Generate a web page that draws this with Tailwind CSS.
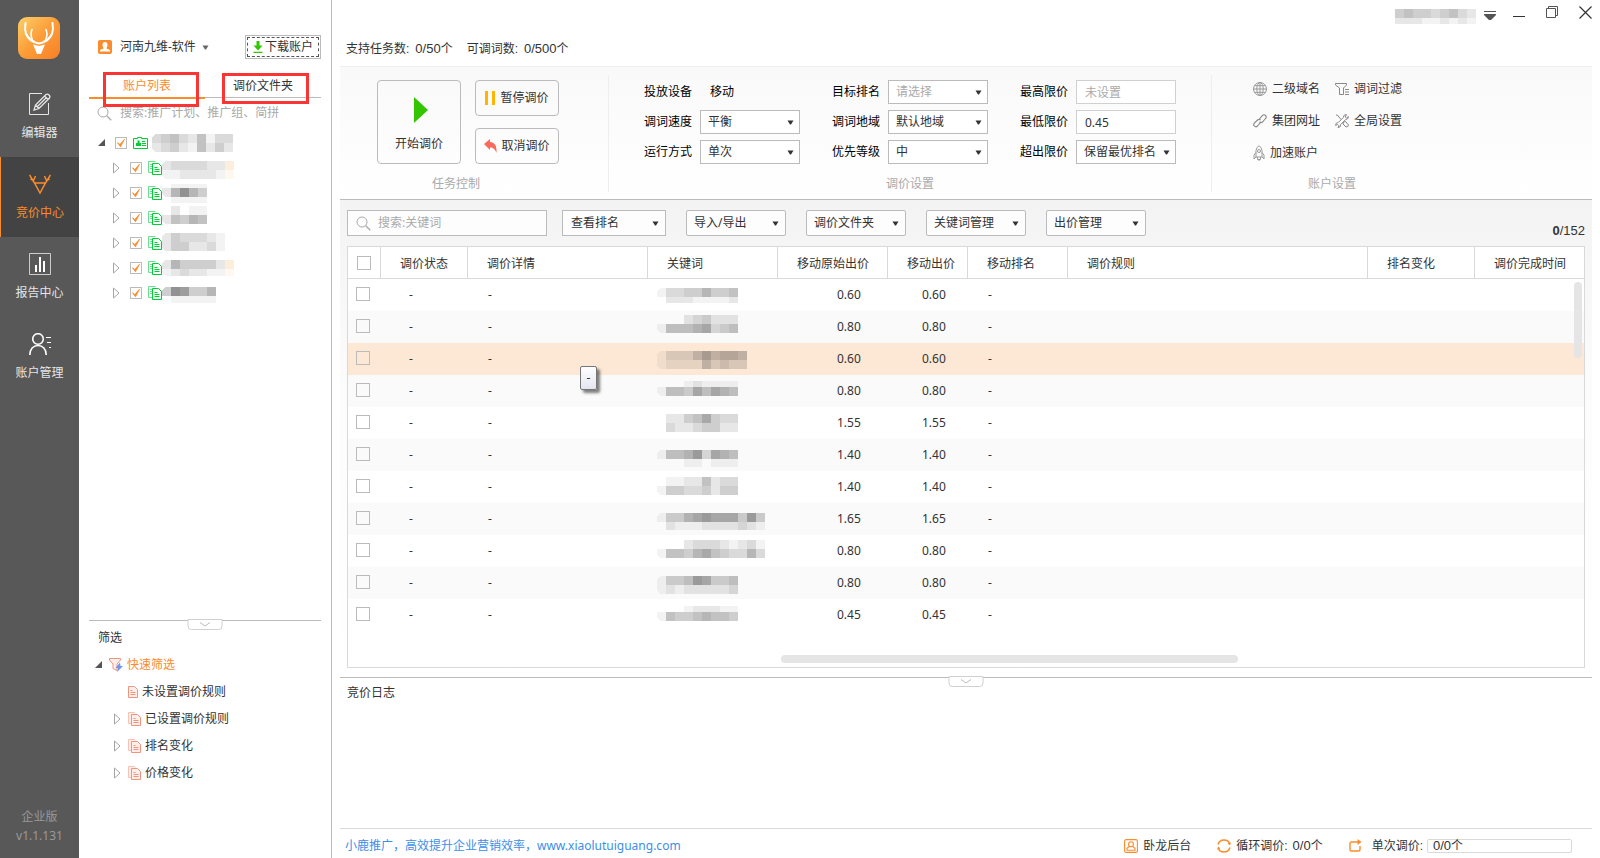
<!DOCTYPE html>
<html lang="zh-CN">
<head>
<meta charset="UTF-8">
<title>小鹿推广 – 竞价中心</title>
<meta name="viewport" content="width=device-width,initial-scale=1">
<script src="https://cdn.jsdelivr.net/npm/@tailwindcss/browser@4"></script>
</head>
<body class="flex min-h-screen bg-white pr-2 font-['Noto_Sans','Noto_Sans_CJK_SC',sans-serif] text-xs text-[#333]">

<!-- icon sprite -->
<svg class="hidden">
  <symbol id="i-search" viewBox="0 0 15 15"><circle cx="6" cy="6" r="5" fill="none" stroke="currentColor"/><path d="M9.8 9.8l4.4 4.4" stroke="currentColor" stroke-width="1.4"/></symbol>
  <symbol id="i-down" viewBox="0 0 7 5"><path d="M.5.500h6L4 4.500H3z" fill="currentColor"/></symbol>
  <symbol id="i-open" viewBox="0 0 8 8"><path d="M8 0v8H0z" fill="#555"/></symbol>
  <symbol id="i-closed" viewBox="0 0 7 12"><path d="M.5 1v10L6 6z" fill="#fff" stroke="#a5a5a5"/></symbol>
  <symbol id="i-tick" viewBox="0 0 12 12"><path d="M2.500 5.800l2.300 1.700L9.500 2.200 5.500 9.800z" fill="#fa8c2c" stroke="#fa8c2c" stroke-width=".8"/></symbol>
  <symbol id="i-chevron" viewBox="0 0 11 5"><path d="M.5.500l5 3.500 5-3.500" fill="none" stroke="#bbb"/></symbol>
  <symbol id="i-card" viewBox="0 0 15 12"><path d="M.5 1.500h4v-1h4v1h6v10H.5z" fill="#f1fdf5" stroke="#0c3"/><path d="M4.500 3.500h2v2.500h1.500v3H3V6h1.500z" fill="#0c3"/><path d="M9 4.500h3M9 6.500h4M9 8.500h4" stroke="#0c3"/></symbol>
  <symbol id="i-plan" viewBox="0 0 14 14"><path d="M7.500.500h-7v11h3.500M2 3.500h2M2 5.500h2M2 7.500h2" fill="none" stroke="#6bde8f"/><path d="M4.500 2.500h6l3 3v8h-9z" fill="#f1fdf5" stroke="#0c3"/><path d="M6.500 6.500h3M6.500 8.500h5M6.500 10.500h5" stroke="#0c3"/></symbol>
  <symbol id="i-doc" viewBox="0 0 10 12"><path d="M.5.500h6l3 3v8h-9z" fill="#fdeeea" stroke="#ee9580"/><path d="M2.500 4.500h2M2.500 6.500h5M2.500 8.500h5" stroke="#ee9580"/></symbol>
  <symbol id="i-docs" viewBox="0 0 13 14"><path d="M3 11.500H.5v-11h6l1 1" fill="#fdeeea" stroke="#f9c2b3"/><path d="M3.500 2.500h6l3 3v8h-9z" fill="#fdeeea" stroke="#ee9580"/><path d="M5.500 6.500h2M5.500 8.500h5M5.500 10.500h5" stroke="#ee9580"/></symbol>
</svg>

<!-- side navigation -->
<nav class="flex w-[79px] shrink-0 flex-col items-center bg-[#585858] pt-[17px] text-[#e6e6e6]">
  <svg class="mb-[18px] ml-[18px] size-[42px] self-start" viewBox="0 0 42 42">
    <defs><linearGradient id="lg" x1="0" y1="0" x2="1" y2="1"><stop offset="0" stop-color="#fdd06a"/><stop offset=".5" stop-color="#fb9d38"/><stop offset="1" stop-color="#f97f26"/></linearGradient></defs>
    <rect width="42" height="42" rx="9" fill="url(#lg)"/>
    <g fill="none" stroke="#fff" stroke-linecap="round">
      <path d="M7.500 6C6 15 8 20 13 23.500c3 2 5 2.500 8 3 3-.500 5-1 8-3 5-3.500 7-8.500 5.500-17.500" stroke-width="2"/>
      <path d="M14 12.500c-1.500 3.500-1 7.500.500 11M28 12.500c1.500 3.500 1 7.500-.500 11" stroke-width="1.600"/>
      <path d="M7.500 14c1 4.500 5 8 9.500 10.500M34.500 14c-1 4.500-5 8-9.500 10.500" stroke-width="1"/>
    </g>
    <path d="M15 27.500l6 1.500 6-1.500-4 9.500h-4z" fill="#fff"/>
  </svg>
  <a href="#editor" class="flex h-20 w-full flex-col items-center pt-4">
    <svg class="size-[22px]" viewBox="0 0 22 22" fill="none" stroke="#e6e6e6"><path d="M13 .5H.5v21h19V10"/><path d="M5 17l1.500-5L17 1.500q1.500-1 3 .500t.500 3L10 15.500zM6.500 12l3.500 3.500M15.500 3l3.500 3.500M8.500 13.500l9-9" stroke-width="1.300"/></svg>
    <span class="mt-2.5">编辑器</span>
  </a>
  <a href="#bid" class="flex h-20 w-full flex-col items-center border-l border-[#fa8c2c] bg-[#434343] pt-4 text-[#fa8c2c]">
    <svg class="size-[22px]" viewBox="0 0 22 22" fill="none" stroke="currentColor" stroke-width="1.500"><path d="M.5 2l5 8L11 20l5.500-10 5-8M5.500 10h11M1.500 6l3 1.500L6.500 3M20.500 6l-3 1.500L15.500 3"/></svg>
    <span class="mt-2.5">竞价中心</span>
  </a>
  <a href="#report" class="flex h-20 w-full flex-col items-center pt-4">
    <svg class="size-[22px]" viewBox="0 0 22 22"><path d="M.5.500h21v21H.5z" fill="none" stroke="#ccc"/><path d="M7 12v7M11 4v15M15 8v11" stroke="#fff" stroke-width="2"/></svg>
    <span class="mt-2.5">报告中心</span>
  </a>
  <a href="#account" class="flex h-20 w-full flex-col items-center pt-4">
    <svg class="size-[22px]" viewBox="0 0 22 22" fill="none" stroke="#fff"><circle cx="9" cy="6" r="5.300" stroke-width="1.600"/><path d="M.8 22c0-6 3.500-9.500 8.200-9.500s8.200 3.500 8.200 9.500" stroke-width="1.600"/><path d="M17 4.500h5M18 9.500h4M20 14.500h2"/></svg>
    <span class="mt-2.5">账户管理</span>
  </a>
  <div class="mt-auto pb-3.5 text-center text-[#999]">
    <p class="mb-[3px]">企业版</p>
    <p>v1.1.131</p>
  </div>
</nav>

<!-- account panel -->
<aside class="relative flex w-[253px] shrink-0 flex-col border-r border-[#bbb] px-2.5 pt-[35px]">
  <div class="flex h-6 items-center pl-[9px]">
    <svg class="size-3.5" viewBox="0 0 14 14"><rect width="14" height="14" rx="2" fill="#fa8c2c"/><path d="M7 2c2 0 2.500 1.500 2.500 3S8.500 7.500 8.500 8.500L12 10v1.500H2V10l3.500-1.500c0-1-1-2-1-3.500S5 2 7 2z" fill="#fff"/></svg>
    <button class="ml-2 flex items-center gap-1.5">河南九维-软件<svg class="h-[5px] w-[7px] text-[#666]"><use href="#i-down"/></svg></button>
    <button class="ml-auto h-6 border border-[#bbb] p-px"><span class="flex h-5 items-center gap-0.5 border border-dashed border-[#555] px-[5px]"><svg class="h-3 w-[10px]" viewBox="0 0 10 12"><path d="M3.500 0h3v4.500H9.500L5 9.500.5 4.500h3zM.5 10.800h9v1.200h-9z" fill="#33c600"/></svg>下载账户</span></button>
  </div>
  <div class="mt-3 flex h-7 items-stretch">
    <button class="flex-1 border-b-2 border-[#fa8c2c] pt-1 text-[#fa8c2c]">账户列表</button>
    <button class="mb-px flex-1 border-b border-[#bbb] pt-1">调价文件夹</button>
  </div>
  <span class="pointer-events-none absolute left-6 top-[72px] h-[35px] w-24 border-3 border-[#fb3434]"></span>
  <span class="pointer-events-none absolute left-[143px] top-[73px] h-[31px] w-[87px] border-3 border-[#fb3434]"></span>
  <div class="flex h-7 items-center gap-2 pl-2">
    <svg class="size-[15px] text-[#aaa]"><use href="#i-search"/></svg>
    <input aria-label="搜索" placeholder="搜索:推广计划、推广组、简拼" class="min-w-0 flex-1 outline-none placeholder:text-[#aaa]">
  </div>
  <div id="accountTree" class="mt-[3px] flex-1"></div>

  <div class="relative h-[238px] border-t border-[#bbb] pt-[9px] pl-[9px]">
    <button aria-label="收起" class="absolute -top-0.5 left-1/2 flex h-[11px] w-[35px] -translate-x-1/2 items-center justify-center rounded-b-sm border border-[#d0d0d0] bg-white"><svg class="h-[5px] w-[11px]"><use href="#i-chevron"/></svg></button>
    <h2>筛选</h2>
    <ul class="mt-[5px] -ml-[3px]">
      <li class="flex h-[27px] items-center text-[#fa8c2c]">
        <svg class="size-[7px]"><use href="#i-open"/></svg>
        <svg class="mr-1 ml-[7px] size-3.5" viewBox="0 0 14 14"><path d="M.5.500h11v1.500L8 6v6.500l-4-2V6L.5 2z" fill="#fdeeea" stroke="#ee9580"/><path d="M11 4.500L6.500 10H9l-1 4 6-6h-2.500z" fill="#6f95ec"/></svg>
        快速筛选
      </li>
      <li class="flex h-[27px] items-center gap-1 pl-[33px]"><svg class="h-3 w-2.5"><use href="#i-doc"/></svg>未设置调价规则</li>
      <li class="flex h-[27px] items-center gap-1 pl-[19px]"><svg class="mr-[3px] h-3 w-[7px]"><use href="#i-closed"/></svg><svg class="h-3.5 w-[13px]"><use href="#i-docs"/></svg>已设置调价规则</li>
      <li class="flex h-[27px] items-center gap-1 pl-[19px]"><svg class="mr-[3px] h-3 w-[7px]"><use href="#i-closed"/></svg><svg class="h-3.5 w-[13px]"><use href="#i-docs"/></svg>排名变化</li>
      <li class="flex h-[27px] items-center gap-1 pl-[19px]"><svg class="mr-[3px] h-3 w-[7px]"><use href="#i-closed"/></svg><svg class="h-3.5 w-[13px]"><use href="#i-docs"/></svg>价格变化</li>
    </ul>
  </div>
</aside>

<main class="ml-2 flex min-w-0 flex-1 flex-col">
  <!-- title bar -->
  <header class="flex h-[66px] items-start justify-between">
    <p class="flex gap-3.5 pt-[41px] pl-1.5 font-['Liberation_Sans','Noto_Sans_CJK_SC',sans-serif]">
      <span class="flex items-center gap-1.5">支持任务数:<span class="text-[13px] leading-4">0/50<span class="text-xs">个</span></span></span>
      <span class="flex items-center gap-1.5">可调词数:<span class="text-[13px] leading-4">0/500<span class="text-xs">个</span></span></span>
    </p>
    <div class="flex items-center">
      <svg id="userName" class="h-6 w-[90px]"></svg>
      <button aria-label="菜单" class="ml-2"><svg class="mt-1.5 h-[9px] w-3" viewBox="0 0 12 9"><path d="M0 0h12v1H0zM0 3h12v1L7 9H5L0 4z" fill="#555"/></svg></button>
      <button aria-label="最小化" class="ml-[17px]"><svg class="h-6 w-3" viewBox="0 0 12 24"><path d="M0 16.500h12" stroke="#333"/></svg></button>
      <button aria-label="还原" class="ml-[21px]"><svg class="size-3" viewBox="0 0 12 12" fill="none" stroke="#555"><path d="M.5 2.500h9v9h-9zM2.500 2.500v-2h9v9h-2"/></svg></button>
      <button aria-label="关闭" class="ml-[21px]"><svg class="size-[13px]" viewBox="0 0 13 13" stroke="#333" stroke-width="1.200"><path d="M.5.500l12 12M12.500.500l-12 12"/></svg></button>
    </div>
  </header>

  <!-- ribbon -->
  <section class="flex border-t border-b border-t-[#eee] border-b-[#bbb] bg-linear-to-b from-[#f9f9f9] to-white pt-2 pb-[7px] text-black">
    <div class="flex flex-col gap-3 border-r border-[#eee] pt-[5px] pr-[49px] pl-[37px] text-[#333]">
      <div class="flex gap-3.5">
        <button class="flex h-[84px] w-[84px] flex-col items-center rounded-sm border border-[#bbb] pt-4">
          <svg class="h-[26px] w-[18px]" viewBox="0 0 18 26"><path d="M4 0l14 13L4 26z" fill="#33c600"/></svg>
          <span class="mt-[13px]">开始调价</span>
        </button>
        <div class="flex flex-col justify-between">
          <button class="flex h-9 w-[84px] items-center justify-center gap-1 rounded-sm border border-[#bbb]"><svg class="h-3.5 w-[11px]" viewBox="0 0 11 14"><path d="M0 0h3v14H0zM7 0h3v14H7z" fill="#ffb400"/></svg>暂停调价</button>
          <button class="flex h-9 w-[84px] items-center justify-center gap-1 rounded-sm border border-[#bbb]"><svg class="h-3.5 w-[13px]" viewBox="0 0 13 14"><path d="M0 5l6-5v3c5 .500 7 4 6.500 11C11 10 9 8.500 6 8.500V11z" fill="#fb6a5b"/></svg>取消调价</button>
        </div>
      </div>
      <h2 class="pl-[55px] text-[#aaa]">任务控制</h2>
    </div>
    <div class="flex flex-col gap-3 border-r border-[#eee] px-[35px] pt-[5px]">
      <div id="settings" class="grid grid-cols-3 gap-x-8 gap-y-1.5"></div>
      <h2 class="text-center text-[#aaa]">调价设置</h2>
    </div>
    <div class="flex flex-1 flex-col pt-1.5 pl-[41px] text-[#333]">
      <div class="grid h-[95px] auto-rows-[16px] grid-cols-[max-content_max-content] gap-x-[15px] gap-y-4">
        <a href="#domain" class="flex items-center gap-[5px]"><svg class="size-3.5" viewBox="0 0 14 14" fill="none" stroke="#999"><circle cx="7" cy="7" r="6.500"/><ellipse cx="7" cy="7" rx="3.200" ry="6.500"/><path d="M7 .5v13M.5 7h13M1.500 3.700h11M1.500 10.300h11"/></svg>二级域名</a>
        <a href="#filter" class="flex items-center gap-[5px]"><svg class="size-3.5" viewBox="0 0 14 14" fill="none" stroke="#888"><path d="M.5 1.500h11v1.500L8.500 6v6.500h-4V6L.5 3zM10 7.500h4M10 10h4M10 12.500h4"/></svg>调词过滤</a>
        <a href="#group" class="flex items-center gap-[5px]"><svg class="size-3.5" viewBox="0 0 14 14" fill="none" stroke="#888" stroke-width="1.100"><path d="M6 5.500L9.500 1.500q1.500-1.500 3 0t0 3L9.500 8q-1.500 1.200-3 0M8 7.800L4.500 12q-1.500 1.500-3 .200t-.200-3L4.500 6q1.500-1.200 3 0"/></svg>集团网址</a>
        <a href="#global" class="flex items-center gap-[5px]"><svg class="size-3.5" viewBox="0 0 14 14" fill="none" stroke="#888"><path d="M1 1l1.500.200L6 5.500M8.500 8l2-.500L13.500 11q0 2-2.500 2L8 10zM13.500 2.500L11.500 4l-1.300-1L11.500.600Q8.500.200 8.300 3.500l-5 5Q.5 8.500.6 11.500l2-1 1.300 1.300-1 1.700q3 .200 2.800-3l5-5q2.800-.200 2.800-3z"/></svg>全局设置</a>
        <a href="#boost" class="flex items-center gap-[5px]"><svg class="h-4 w-3" viewBox="0 0 12 16" fill="none" stroke="#999"><path d="M3 12V5.500Q3.500 2 6 .700 8.500 2 9 5.500V12zM3 7.500L1 10v4l2-2M9 7.500l2 2.500v4l-2-2M4.500 12v2.500h3V12M6 14v2"/><circle cx="6" cy="6" r="1.500"/></svg>加速账户</a>
      </div>
      <h2 class="pl-[55px] text-[#aaa]">账户设置</h2>
    </div>
  </section>

  <!-- keyword area -->
  <section class="relative flex flex-1 flex-col bg-linear-to-b from-[#f3f3f3] via-[#fcfcfc] via-40% to-white px-[7px] pt-2.5 pb-[9px]">
    <div class="flex h-9 items-start">
      <label class="mr-[15px] flex h-[26px] w-[200px] items-center gap-[7px] border border-[#bbb] bg-[#fdfdfd] px-2">
        <svg class="size-[15px] shrink-0 text-[#aaa]"><use href="#i-search"/></svg>
        <input aria-label="搜索关键词" placeholder="搜索:关键词" class="min-w-0 flex-1 outline-none placeholder:text-[#aaa]">
      </label>
      <div class="flex gap-5">
        <button class="flex h-[26px] w-[104px] items-center justify-between border border-[#bbb] bg-[#fdfdfd] pr-1.5 pl-2">查看排名<svg class="h-[5px] w-[7px]"><use href="#i-down"/></svg></button>
        <button class="flex h-[26px] w-[100px] items-center justify-between rounded-xs border border-[#bbb] bg-[#fdfdfd] pr-1.5 pl-[7px]">导入/导出<svg class="h-[5px] w-[7px]"><use href="#i-down"/></svg></button>
        <button class="flex h-[26px] w-[100px] items-center justify-between rounded-xs border border-[#bbb] bg-[#fdfdfd] pr-1.5 pl-[7px]">调价文件夹<svg class="h-[5px] w-[7px]"><use href="#i-down"/></svg></button>
        <button class="flex h-[26px] w-[100px] items-center justify-between rounded-xs border border-[#bbb] bg-[#fdfdfd] pr-1.5 pl-[7px]">关键词管理<svg class="h-[5px] w-[7px]"><use href="#i-down"/></svg></button>
        <button class="flex h-[26px] w-[100px] items-center justify-between rounded-xs border border-[#bbb] bg-[#fdfdfd] pr-1.5 pl-[7px]">出价管理<svg class="h-[5px] w-[7px]"><use href="#i-down"/></svg></button>
      </div>
      <span class="ml-auto pt-[13px] font-['Liberation_Sans',sans-serif] text-[13px] leading-4"><b class="font-semibold">0</b>/152</span>
    </div>
    <div class="relative flex-1 border border-[#d9d9d9] bg-white pb-[35px]">
      <table class="w-full table-fixed border-separate border-spacing-0 text-left">
        <colgroup>
          <col class="w-[33px]"><col class="w-[87px]"><col class="w-[180px]"><col class="w-[130px]"><col class="w-[110px]"><col class="w-20"><col class="w-[100px]"><col><col class="w-[107px]"><col class="w-[109px]">
        </colgroup>
        <thead id="heads"></thead>
        <tbody id="rows"></tbody>
      </table>
      <span class="absolute top-[35px] right-0.5 h-[76px] w-2 rounded-full bg-[#e5e5e5]"></span>
      <span class="absolute bottom-1 left-[35%] h-2 w-[37%] rounded-full bg-[#e5e5e5]"></span>
    </div>
    <span class="absolute top-[166px] left-[240px] flex h-6 w-[17px] items-center justify-center rounded-xs border border-[#767676] bg-linear-to-b from-white to-[#e4e5f0] shadow-[3px_3px_3px_rgba(0,0,0,0.5)]">-</span>
  </section>

  <!-- log -->
  <section class="relative h-[151px] border-t border-[#bbb] pt-[7px] pl-[7px]">
    <button aria-label="收起" class="absolute -top-0.5 left-1/2 flex h-[11px] w-[35px] -translate-x-1/2 items-center justify-center rounded-b-sm border border-[#d0d0d0] bg-white"><svg class="h-[5px] w-[11px]"><use href="#i-chevron"/></svg></button>
    <h2>竞价日志</h2>
  </section>

  <footer class="flex h-[30px] items-center border-t border-[#d9d9d9] pt-1 pr-5 pl-[5px]">
    <a href="#home" class="text-[#3c8ee8]">小鹿推广，高效提升企业营销效率，www.xiaolutuiguang.com</a>
    <a href="#backend" class="ml-auto flex items-center gap-[5px]"><svg class="size-3.5" viewBox="0 0 14 14" fill="none" stroke="#fa8c2c" stroke-width="1.100"><rect x=".6" y=".6" width="12.800" height="12.800" rx="1.500"/><circle cx="7" cy="5.200" r="2.400"/><path d="M5.500 7.200L3 9.200v2h8v-2L8.500 7.200"/></svg>卧龙后台</a>
    <p class="ml-[26px] flex items-center gap-[5px] font-['Liberation_Sans','Noto_Sans_CJK_SC',sans-serif]">
      <svg class="size-3.5" viewBox="0 0 14 14" fill="none" stroke="#fa8c2c" stroke-width="1.500"><path d="M1 5.500Q2.500 1 7 1t5.500 3.500M13 8.500Q11.500 13 7 13T1.500 9.500"/><path d="M14 3.500l-1 3-2.500-2zM0 10.500l1-3 2.500 2z" fill="#fa8c2c" stroke="none"/></svg>
      循环调价:<span class="text-[13px] leading-4">0/0<span class="text-xs">个</span></span>
    </p>
    <div class="ml-[26px] flex items-center font-['Liberation_Sans','Noto_Sans_CJK_SC',sans-serif]">
      <svg class="size-[13px]" viewBox="0 0 13 13" fill="none" stroke="#fa8c2c" stroke-width="1.400"><path d="M9 3H2.500Q1 3 1 4.500v6Q1 12 2.500 12h7q1.500 0 1.500-1.500V7"/><path d="M8.500 0l4 3-4 3z" fill="#fa8c2c" stroke="none"/></svg>
      <span class="mr-1 ml-2.5">单次调价:</span>
      <span class="flex h-3.5 w-[145px] items-center rounded-xs border border-[#d9d9d9] pl-[5px] text-[13px] leading-4"><span>0/0<span class="text-xs">个</span></span></span>
    </div>
  </footer>
</main>

<script>
// Masked names are 9px cells, a digit is the darkness of the cell, "." leaves it empty.
function mosaic(m, rowHeight) {
  let y = m.y, out = "";
  m.lines.forEach(([h, cells], line) => {
    [...cells].forEach((c, i) => {
      if (c === ".") return;
      const fill = c === "o" ? "#fdeedb" : c === "p" ? "#fff8ee" : `rgba(0,0,0,${c * 0.048})`;
      const x = i * 9;
      // the stroke starts with a trimmed corner, top or bottom
      if (i === 0) {
        const d = line === 0
          ? `M9 ${y}H3L0 ${y + 3}V${y + h}H9z`
          : `M9 ${y}H0V${y + h - 3}L3 ${y + h}H9z`;
        out += `<path d="${d}" fill="${fill}"/>`;
      } else {
        out += `<rect x="${x}" y="${y}" width="9" height="${h}" fill="${fill}"/>`;
      }
    });
    y += h;
  });
  return `<svg class="block overflow-hidden" width="110" height="${rowHeight}" shape-rendering="crispEdges">${out}</svg>`;
}

const accounts = [
  { y: 4, lines: [[9, "345325133"], [9, "234215242"]] },
  { y: 6, lines: [[9, "2333322o"], [9, "1122221p"]] },
  { y: 4, lines: [[4, ".1111"], [9, "26964"], [6, ".1111"]] },
  { y: 1, lines: [[9, ".2011"], [9, "25465"]] },
  { y: 3, lines: [[9, "2433321"], [9, "2442231"]] },
  { y: 5, lines: [[9, "2644442o"], [7, "1232211p"]] },
  { y: 7, lines: [[9, "498446"], [7, ".11111"]] },
];

const tree = document.getElementById("accountTree");
accounts.forEach((a, i) => {
  const root = i === 0;
  tree.insertAdjacentHTML("beforeend", `
    <div class="flex h-[25px] items-center ${root ? "pl-[9px]" : "pl-6"}">
      <svg class="${root ? "size-[7px]" : "h-3 w-[7px]"}"><use href="#${root ? "i-open" : "i-closed"}"/></svg>
      <span class="mr-1.5 ml-2.5 grid">
        <input type="checkbox" checked aria-label="账户 ${i}" class="col-start-1 row-start-1 size-3 appearance-none border border-[#bbb] bg-white">
        <svg class="pointer-events-none col-start-1 row-start-1 size-3"><use href="#i-tick"/></svg>
      </span>
      <svg class="${root ? "mr-1 h-3 w-[15px]" : "size-3.5"}"><use href="#${root ? "i-card" : "i-plan"}"/></svg>
      ${mosaic(a, 25)}
    </div>`);
});

document.getElementById("userName").outerHTML =
  mosaic({ y: 9, lines: [[9, "0454434532"], [6, "0222112121"]] }, 24).replace('width="110"', 'width="90"');

const settings = [
  { label: "投放设备", kind: "text", value: "移动" },
  { label: "目标排名", kind: "select", value: "请选择", empty: true },
  { label: "最高限价", kind: "input", hint: "未设置" },
  { label: "调词速度", kind: "select", value: "平衡" },
  { label: "调词地域", kind: "select", value: "默认地域" },
  { label: "最低限价", kind: "input", value: "0.45" },
  { label: "运行方式", kind: "select", value: "单次" },
  { label: "优先等级", kind: "select", value: "中" },
  { label: "超出限价", kind: "select", value: "保留最优排名" },
];

document.getElementById("settings").innerHTML = settings.map((s, i) => {
  if (s.kind === "text") {
    return `<p class="flex h-6 items-center gap-2"><span class="w-12">${s.label}</span><span class="w-[100px] pl-2.5">${s.value}</span></p>`;
  }
  let field = `<input id="set${i}" value="${s.value || ""}" placeholder="${s.hint || ""}" class="h-6 w-[100px] border border-[#d0d0d0] bg-white px-2 text-[#333] placeholder:text-[#aaa]">`;
  if (s.kind === "select") {
    field = `<span class="relative">
      <select id="set${i}" class="block h-6 w-[100px] appearance-none border border-[#bbb] bg-white pl-[7px] ${s.empty ? "text-[#aaa]" : "text-[#333]"}"><option>${s.value}</option></select>
      <svg class="pointer-events-none absolute top-2.5 right-1.5 h-[5px] w-[7px] text-[#333]"><use href="#i-down"/></svg>
    </span>`;
  }
  return `<div class="flex h-6 items-center gap-2"><label for="set${i}" class="w-12">${s.label}</label>${field}</div>`;
}).join("");

const heads = ["调价状态", "调价详情", "关键词", "移动原始出价", "移动出价", "移动排名", "调价规则", "排名变化", "调价完成时间"];
document.getElementById("heads").innerHTML = `<tr class="h-8">
  <th class="border-r border-b border-[#d9d9d9] pl-[9px]"><input type="checkbox" aria-label="全选" class="block size-3.5 appearance-none border border-[#bbb]"></th>
  ${heads.map((h, i) => `<th class="border-b border-[#d9d9d9] pt-0.5 pl-[19px] font-normal whitespace-nowrap ${i < heads.length - 1 ? "border-r" : ""}">${h}</th>`).join("")}
</tr>`;

const keywords = [
  { price: "0.60", y: 9, lines: [[9, "133446445"], [6, "022211112"]] },
  { price: "0.80", y: 4, lines: [[9, "...234222"], [9, "155567345"]] },
  { price: "0.60", y: 8, lines: [[9, "1333575665"], [9, "1222253433"]], active: true },
  { price: "0.80", y: 6, lines: [[6, "...121111"], [9, "155475765"]] },
  { price: "1.55", y: 7, lines: [[9, "022457433"], [9, "032234422"]] },
  { price: "1.40", y: 11, lines: [[9, "155683765"], [8, "...110111"]] },
  { price: "1.40", y: 6, lines: [[9, "011225233"], [9, "144334244"]] },
  { price: "1.65", y: 10, lines: [[9, "144678777484"], [8, "021112222321"]] },
  { price: "0.80", y: 5, lines: [[9, "...233321231"], [9, "155467543363"]] },
  { price: "0.80", y: 9, lines: [[9, "144587445"], [9, "121222223"]] },
  { price: "0.45", y: 7, lines: [[6, "...122211"], [9, "154456554"]] },
];

document.getElementById("rows").innerHTML = keywords.map((k, i) => `
  <tr class="h-8 ${k.active ? "bg-[#fde8d6]" : i % 2 ? "bg-[#fafafa]" : "bg-white"}">
    <td class="pb-0.5 pl-2"><input type="checkbox" aria-label="选择第${i + 1}行" class="block size-3.5 appearance-none border border-[#bbb]"></td>
    <td class="pl-7">-</td>
    <td class="pl-5">-</td>
    <td class="pl-[9px]">${mosaic(k, 32)}</td>
    <td class="pl-[59px]">${k.price}</td>
    <td class="pl-[34px]">${k.price}</td>
    <td class="pl-5">-</td>
    <td></td>
    <td></td>
    <td></td>
  </tr>`).join("");
</script>
</body>
</html>
